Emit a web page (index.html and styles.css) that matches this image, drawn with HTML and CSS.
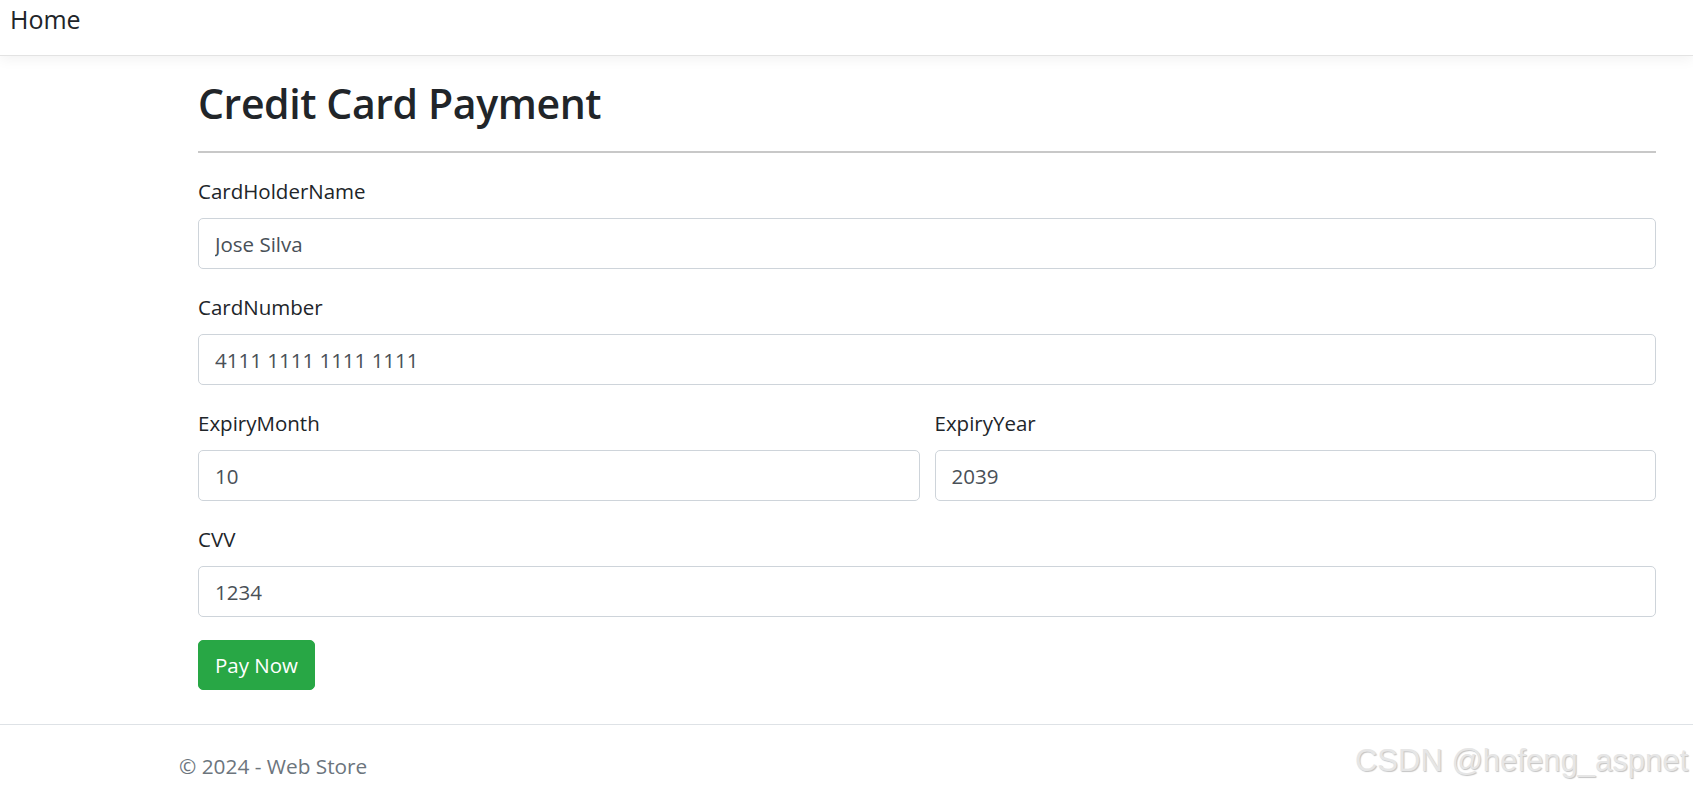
FILE: index.html
```html
<!DOCTYPE html>
<html>
<head>
<meta charset="utf-8">
<link rel="stylesheet" href="styles.css">
</head>
<body>
<header class="topbar">
  <a class="brand" href="#">Home</a>
</header>
<main class="page">
  <h1 class="title">Credit Card Payment</h1>
  <hr class="rule">
  <form class="form">
    <div class="group">
      <label class="label">CardHolderName</label>
      <input class="field" type="text" value="Jose Silva">
    </div>
    <div class="group">
      <label class="label">CardNumber</label>
      <input class="field" type="text" value="4111 1111 1111 1111">
    </div>
    <div class="group row">
      <div class="col">
        <label class="label">ExpiryMonth</label>
        <input class="field" type="text" value="10">
      </div>
      <div class="col">
        <label class="label">ExpiryYear</label>
        <input class="field" type="text" value="2039">
      </div>
    </div>
    <div class="group">
      <label class="label">CVV</label>
      <input class="field" type="text" value="1234">
    </div>
    <button class="btn" type="button">Pay Now</button>
  </form>
</main>
<footer class="footer">
  <span class="copy">© 2024 - Web Store</span>
  <span class="mark">CSDN @hefeng_aspnet</span>
</footer>
</body>
</html>
```
FILE: styles.css
```css
* { box-sizing: border-box; }
html, body { margin: 0; padding: 0; }
body {
  font-family: "Open Sans", "Noto Sans", sans-serif;
  color: #212529;
  background: #fff;
  width: 1693px;
  height: 790px;
  overflow: hidden;
}
.topbar {
  height: 56px;
  border-bottom: 1px solid #e3e3e3;
  box-shadow: 0 4px 12px rgba(0,0,0,0.05);
  padding: 2px 10px 0;
}
.brand {
  font-size: 25px;
  color: #212529;
  text-decoration: none;
  line-height: 34px;
}
.page {
  margin-left: 198px;
  width: 1458px;
  padding-top: 16px;
}
.title {
  margin: 0;
  font-size: 41px;
  font-weight: 600;
  line-height: 62px;
  letter-spacing: -0.4px;
}
.rule {
  margin: 17px 0 0;
  border: 0;
  border-top: 2px solid #c8c8c8;
}
.form { padding-top: 23px; }
.group { margin-bottom: 23px; }
.row { display: flex; gap: 15px; }
.col { flex: 1; }
.label {
  display: block;
  font-size: 20.5px;
  line-height: 30px;
  margin-bottom: 12px;
}
.field {
  display: block;
  width: 100%;
  height: 51px;
  padding: 0 16px;
  font-family: inherit;
  font-size: 20.5px;
  color: #495057;
  border: 1px solid #ced4da;
  border-radius: 5px;
  background: #fff;
}
.btn {
  display: block;
  margin-top: 0;
  width: 117px;
  height: 50px;
  background: #28a745;
  border: 1px solid #28a745;
  border-radius: 5px;
  color: #fff;
  font-family: inherit;
  font-size: 20.5px;
  padding: 0;
}
.footer {
  position: absolute;
  top: 724px;
  left: 0;
  width: 1693px;
  height: 66px;
  border-top: 1px solid #dee2e6;
  display: flex;
  justify-content: space-between;
  align-items: flex-start;
  padding: 0 5px 0 179px;
}
.copy {
  font-size: 20.8px;
  color: #6c757d;
  line-height: 30px;
  margin-top: 26px;
}
.mark {
  font-family: "Liberation Sans", Arial, sans-serif;
  font-size: 31px;
  color: #e6e6e6;
  text-shadow: 1px 1px 1px #c4c4c4;
  line-height: 34px;
  margin-top: 19px;
}
```
